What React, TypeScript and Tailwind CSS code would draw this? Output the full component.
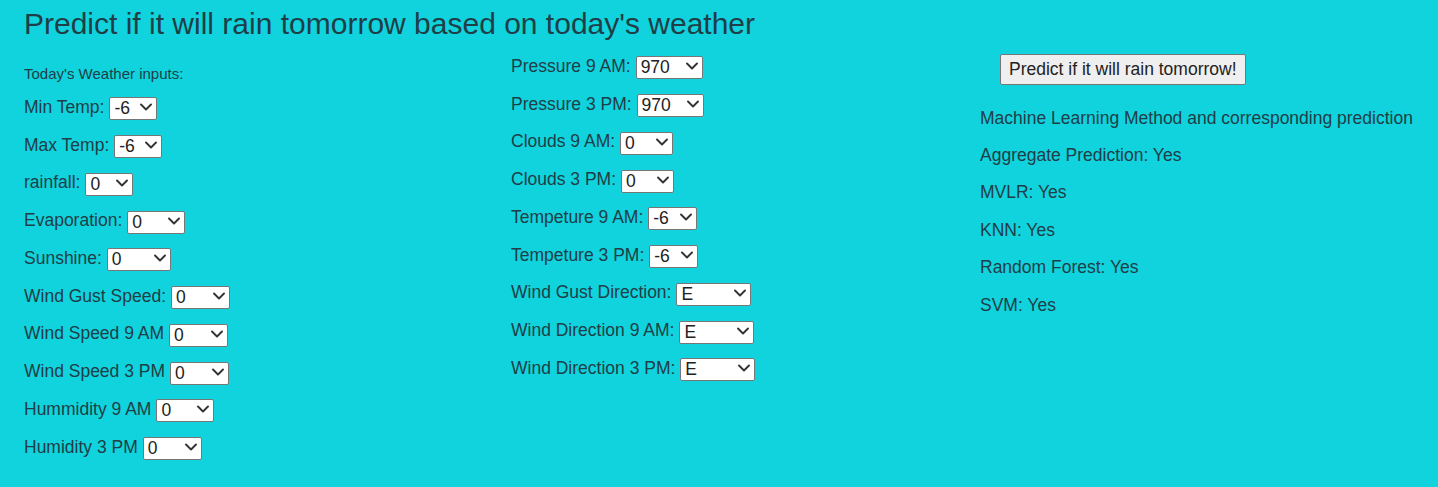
import { ChevronDown } from 'lucide-react'

type Field = {
  label: string
  value: string
  options: string[]
  width: string
}

const temps = ['-6', '-5', '-4', '-3', '-2', '-1', '0', '1', '2', '3', '4', '5']
const zeros = ['0', '1', '2', '3', '4', '5', '10', '20', '30', '40', '50', '100']
const pressures = ['970', '980', '990', '1000', '1010', '1020', '1030', '1040']
const clouds = ['0', '1', '2', '3', '4', '5', '6', '7', '8']
const directions = ['E', 'ENE', 'ESE', 'N', 'NE', 'NNE', 'NNW', 'NW', 'S', 'SE', 'SSE', 'SSW', 'SW', 'W', 'WNW', 'WSW']

const leftFields: Field[] = [
  { label: 'Min Temp:', value: '-6', options: temps, width: 'w-[48px]' },
  { label: 'Max Temp:', value: '-6', options: temps, width: 'w-[48px]' },
  { label: 'rainfall:', value: '0', options: zeros, width: 'w-[48px]' },
  { label: 'Evaporation:', value: '0', options: zeros, width: 'w-[58px]' },
  { label: 'Sunshine:', value: '0', options: zeros, width: 'w-[64px]' },
  { label: 'Wind Gust Speed:', value: '0', options: zeros, width: 'w-[59px]' },
  { label: 'Wind Speed 9 AM', value: '0', options: zeros, width: 'w-[59px]' },
  { label: 'Wind Speed 3 PM', value: '0', options: zeros, width: 'w-[59px]' },
  { label: 'Hummidity 9 AM', value: '0', options: zeros, width: 'w-[58px]' },
  { label: 'Humidity 3 PM', value: '0', options: zeros, width: 'w-[59px]' },
]

const middleFields: Field[] = [
  { label: 'Pressure 9 AM:', value: '970', options: pressures, width: 'w-[67px]' },
  { label: 'Pressure 3 PM:', value: '970', options: pressures, width: 'w-[67px]' },
  { label: 'Clouds 9 AM:', value: '0', options: clouds, width: 'w-[53px]' },
  { label: 'Clouds 3 PM:', value: '0', options: clouds, width: 'w-[53px]' },
  { label: 'Tempeture 9 AM:', value: '-6', options: temps, width: 'w-[49px]' },
  { label: 'Tempeture 3 PM:', value: '-6', options: temps, width: 'w-[49px]' },
  { label: 'Wind Gust Direction:', value: 'E', options: directions, width: 'w-[75px]' },
  { label: 'Wind Direction 9 AM:', value: 'E', options: directions, width: 'w-[75px]' },
  { label: 'Wind Direction 3 PM:', value: 'E', options: directions, width: 'w-[75px]' },
]

const predictions = [
  'Machine Learning Method and corresponding prediction',
  'Aggregate Prediction: Yes',
  'MVLR: Yes',
  'KNN: Yes',
  'Random Forest: Yes',
  'SVM: Yes',
]

function Select({ field }: { field: Field }) {
  return (
    <div className={`relative h-[23px] ${field.width}`}>
      <select
        defaultValue={field.value}
        className="h-full w-full appearance-none rounded-[2px] border border-[#767676] bg-white pl-[4px] text-[17.5px] leading-[21px] text-[#222] outline-none"
      >
        {field.options.map((o) => (
          <option key={o} value={o}>
            {o}
          </option>
        ))}
      </select>
      <ChevronDown
        size={20}
        strokeWidth={2.3}
        className="pointer-events-none absolute right-[1px] top-[2px] text-[#333]"
      />
    </div>
  )
}

function Row({ field }: { field: Field }) {
  return (
    <div className="flex h-[37.75px] items-center gap-[5px]">
      <span>{field.label}</span>
      <Select field={field} />
    </div>
  )
}

export default function App() {
  return (
    <div
      className="min-h-screen bg-[#10d3dd] text-[17.5px] text-[#1f3e47]"
      style={{ fontFamily: '"Liberation Sans", Arial, sans-serif' }}
    >
      {/* Title */}
      <h1 className="pl-6 pt-[7px] text-[30px] leading-[34px]">
        Predict if it will rain tomorrow based on today's weather
      </h1>

      <div className="grid grid-cols-[487px_469px_1fr] pl-6">
        {/* Left column */}
        <div className="pt-[20px]">
          <div className="flex h-[27px] items-center text-[15px]">Today's Weather inputs:</div>
          {leftFields.map((f) => (
            <Row key={f.label} field={f} />
          ))}
        </div>

        {/* Middle column */}
        <div className="pt-[6px]">
          {middleFields.map((f) => (
            <Row key={f.label} field={f} />
          ))}
        </div>

        {/* Right column */}
        <div className="pt-[13px]">
          <button className="ml-[20px] h-[31px] rounded-[2px] border border-[#767676] bg-[#efefef] px-[8px] text-[17.5px] text-[#222]">
            Predict if it will rain tomorrow!
          </button>
          <div className="mt-[14px]">
            {predictions.map((p) => (
              <div key={p} className="flex h-[37.4px] items-center">
                {p}
              </div>
            ))}
          </div>
        </div>
      </div>
    </div>
  )
}
